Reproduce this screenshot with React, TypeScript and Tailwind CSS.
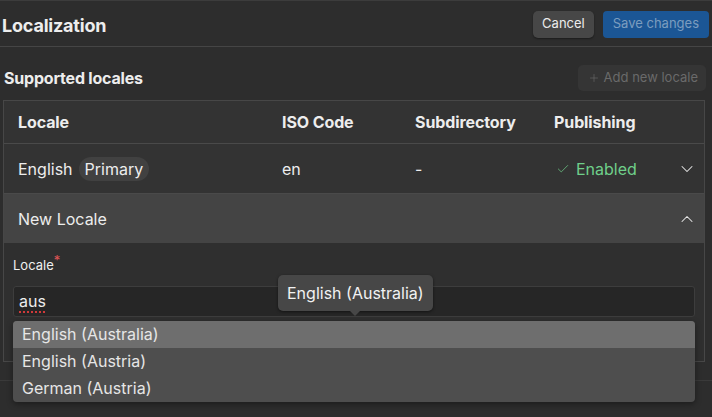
import { Check, ChevronDown, ChevronUp, Plus } from 'lucide-react';

const options = ['English (Australia)', 'English (Austria)', 'German (Austria)'];

export default function App() {
  return (
    <div className="w-[712px] h-[417px] overflow-hidden bg-[#2d2d2d] text-[#ededed] font-['Inter',sans-serif] border-t border-[#3c3c3c]">
      {/* header */}
      <div className="h-[46px] flex items-center justify-between pl-[2px] pr-[3px] border-b border-[#454545]">
        <h1 className="mt-[3px] text-[18px] font-bold tracking-[-0.2px]">Localization</h1>
        <div className="flex items-center gap-[9px] mt-[1px]">
          <button className="h-[27px] px-[9px] rounded-[5px] bg-[#474747] text-[13px] text-[#ececec] shadow-[0_1px_2px_rgba(0,0,0,0.4)]">
            Cancel
          </button>
          <button className="h-[27px] px-[10px] rounded-[4px] bg-[#1b5695] text-[13px] text-[#7c9dbf]">
            Save changes
          </button>
        </div>
      </div>

      <div className="pl-[3px] pr-[7px]">
        <div className="pt-[18px] pb-[9px] flex items-center justify-between">
          <h2 className="pl-[1px] text-[16px] font-bold tracking-[-0.2px]">Supported locales</h2>
          <button className="h-[26px] pl-[10px] pr-[8px] mr-[-1px] rounded-[5px] bg-[#353535] text-[13px] text-[#6a6a6a] flex items-center gap-[4px]">
            <Plus size={12} strokeWidth={1.25} />
            Add new locale
          </button>
        </div>

        <div className="relative border border-[#474747] bg-[#333333]">
          <div className="h-[42px] flex items-center pl-[14px] text-[16px] font-bold tracking-[-0.1px]">
            <div className="w-[264px]">Locale</div>
            <div className="w-[133px]">ISO Code</div>
            <div className="w-[139px]">Subdirectory</div>
            <div>Publishing</div>
          </div>

          <div className="h-[50px] flex items-center pl-[14px] pr-[7px] text-[16px] border-t border-[#4a4a4a]">
            <div className="w-[264px] flex items-center gap-[6px]">
              English
              <span className="h-[24px] px-[6px] rounded-full bg-[#414141] flex items-center">Primary</span>
            </div>
            <div className="w-[133px]">en</div>
            <div className="w-[139px]">-</div>
            <div className="flex-1 flex items-center gap-[6px] text-[#6fcf8a]">
              <Check size={14} strokeWidth={1.25} className="ml-[2px]" />
              Enabled
            </div>
            <ChevronDown size={20} strokeWidth={1.25} className="text-[#e8e8e8]" />
          </div>

          <div className="h-[50px] flex items-center justify-between pl-[14px] pr-[7px] text-[16px] bg-[#444444] border-t border-[#4a4a4a]">
            New Locale
            <ChevronUp size={20} strokeWidth={1.25} className="text-[#e8e8e8]" />
          </div>

          <div className="bg-[#2f2f2f] pl-[9px] pr-[9px] pt-[13px] pb-[44px]">
            <label className="flex text-[13px] text-[#f0f0f0]">
              Locale<span className="text-[#e05555] text-[13px] leading-none -mt-[2px]">*</span>
            </label>
            <div className="relative mt-[10px]">
              <div className="h-[31px] flex items-center px-[5px] rounded-[3px] bg-[#262626] border border-[#3d3d3d] text-[16px]">
                <span className="underline decoration-dotted decoration-[#d03a3a] decoration-[1.5px] underline-offset-[4px]">aus</span>
              </div>

              <div className="absolute left-[265px] top-[-11px] h-[36px] px-[9px] rounded-[5px] bg-[#474747] text-[16px] text-[#f2f2f2] flex items-center shadow-[0_1px_3px_rgba(0,0,0,0.5)] z-20">
                English (Australia)
                <span className="absolute left-[72px] bottom-[-5px] w-0 h-0 border-l-[5px] border-r-[5px] border-t-[5px] border-l-transparent border-r-transparent border-t-[#474747]" />
              </div>

              <ul className="absolute left-0 right-0 top-[35px] rounded-[4px] bg-[#4e4e4e] overflow-hidden text-[16px] text-[#e6e6e6] shadow-[0_2px_6px_rgba(0,0,0,0.4)] z-10">
                {options.map((o, i) => (
                  <li
                    key={o}
                    className={`h-[27px] flex items-center pl-[9px] ${i === 0 ? 'bg-[#6e6e6e]' : ''}`}
                  >
                    {o}
                  </li>
                ))}
              </ul>
            </div>
          </div>
        </div>
      </div>
      <div className="mt-[18px] border-t border-[#3a3a3a]" />
    </div>
  );
}
